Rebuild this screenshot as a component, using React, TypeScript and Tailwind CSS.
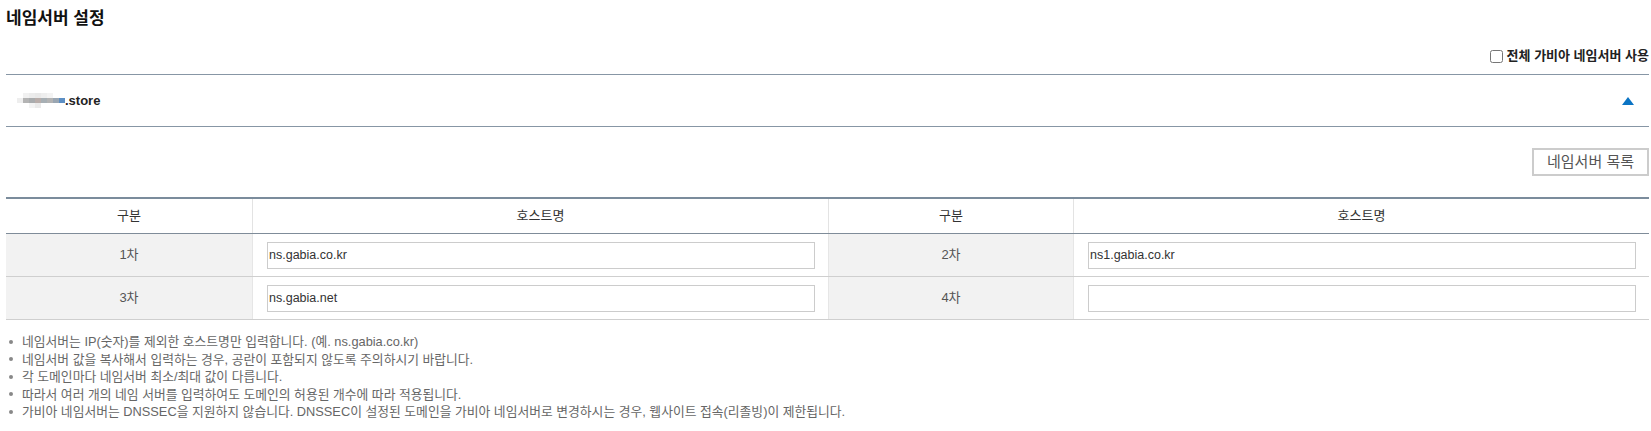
import { useState } from 'react';

const rows = [
  [
    { label: '1차', value: 'ns.gabia.co.kr' },
    { label: '2차', value: 'ns1.gabia.co.kr' },
  ],
  [
    { label: '3차', value: 'ns.gabia.net' },
    { label: '4차', value: '' },
  ],
];

const notes = [
  '네임서버는 IP(숫자)를 제외한 호스트명만 입력합니다. (예. ns.gabia.co.kr)',
  '네임서버 값을 복사해서 입력하는 경우, 공란이 포함되지 않도록 주의하시기 바랍니다.',
  '각 도메인마다 네임서버 최소/최대 값이 다릅니다.',
  '따라서 여러 개의 네임 서버를 입력하여도 도메인의 허용된 개수에 따라 적용됩니다.',
  '가비아 네임서버는 DNSSEC을 지원하지 않습니다. DNSSEC이 설정된 도메인을 가비아 네임서버로 변경하시는 경우, 웹사이트 접속(리졸빙)이 제한됩니다.',
];

// pixelated placeholder for the hidden part of the domain name
const mosaic = [
  ['#ffffff', '#f1f1f1', '#ececec', '#e9e9e9', '#eeeeee', '#f3f3f3', '#ffffff', '#ffffff'],
  ['#eeeeee', '#b4b4b4', '#a9acae', '#b8adaa', '#a7afb4', '#b3b3b3', '#9aa6b2', '#5d8fc4'],
  ['#ffffff', '#ffffff', '#f3f3f3', '#eaeaea', '#ffffff', '#ffffff', '#ffffff', '#ffffff'],
];

function HostInput({ value }: { value: string }) {
  const [text, setText] = useState(value);
  return (
    <input
      value={text}
      onChange={(e) => setText(e.target.value)}
      className="h-[27px] w-full border border-[#cccccc] bg-white px-[1px] text-[12.5px] text-[#333] outline-none"
    />
  );
}

export default function App() {
  return (
    <div className="h-[431px] w-[1651px] overflow-hidden bg-white pl-[6px] pr-[2px] font-['Liberation_Sans','Noto_Sans_CJK_KR',sans-serif]">
      <h2 className="pt-[7px] text-[17px] leading-[24px] font-bold text-[#111]">네임서버 설정</h2>

      <div className="mt-[16px] flex h-[18px] items-center justify-end gap-[4px]">
        <input type="checkbox" className="m-0 h-[13px] w-[13px]" />
        <span className="text-[13px] font-bold text-[#222]">전체 가비아 네임서버 사용</span>
      </div>

      <div className="mt-[9px] flex h-[53px] items-center justify-between border-y border-[#8796a5] pl-[11px] pr-[15px]">
        <div className="flex items-center">
          <div className="flex flex-col">
            {mosaic.map((line, i) => (
              <div key={i} className="flex">
                {line.map((c, j) => (
                  <span key={j} className="h-[5px] w-[6px]" style={{ backgroundColor: c }} />
                ))}
              </div>
            ))}
          </div>
          <span className="text-[13px] font-bold text-[#222]">.store</span>
        </div>
        <span className="h-0 w-0 border-x-[6px] border-b-[8px] border-x-transparent border-b-[#0b74c4]" />
      </div>

      <div className="mt-[21px] flex justify-end">
        <button className="h-[28px] w-[117px] border-2 border-[#cccccc] bg-white text-[15px] text-[#555]">
          네임서버 목록
        </button>
      </div>

      <div className="mt-[21px] border-t-2 border-[#7b8c9c]">
        <div className="grid h-[35px] grid-cols-[246px_576px_245px_1fr] border-b border-[#7f8c99] text-[13px] text-[#333]">
          <div className="flex items-center justify-center">구분</div>
          <div className="flex items-center justify-center border-l border-[#e3e3e3]">호스트명</div>
          <div className="flex items-center justify-center border-l border-[#e3e3e3]">구분</div>
          <div className="flex items-center justify-center border-l border-[#e3e3e3]">호스트명</div>
        </div>
        {rows.map((row, i) => (
          <div
            key={i}
            className="grid h-[43px] grid-cols-[246px_576px_245px_1fr] border-b border-[#cfcfcf] text-[13px] text-[#555]"
          >
            {row.map((cell, j) => (
              <div key={cell.label} className="contents">
                <div
                  className={
                    j === 0
                      ? 'flex items-center justify-center bg-[#f2f2f2]'
                      : 'flex items-center justify-center border-l border-[#e6e6e6] bg-[#f2f2f2]'
                  }
                >
                  {cell.label}
                </div>
                <div className="flex items-center border-l border-[#e6e6e6] pl-[14px] pr-[13px]">
                  <HostInput value={cell.value} />
                </div>
              </div>
            ))}
          </div>
        ))}
      </div>

      <ul className="mt-[13px] text-[12.8px] leading-[17.5px] text-[#666]">
        {notes.map((n) => (
          <li key={n} className="flex items-center">
            <span className="ml-[3px] mr-[9px] h-[4px] w-[4px] rounded-full bg-[#888]" />
            {n}
          </li>
        ))}
      </ul>

      <div className="mt-[10px] flex justify-end">
        <button className="h-[28px] w-[73px] border-2 border-[#cccccc] bg-white" />
      </div>
    </div>
  );
}
